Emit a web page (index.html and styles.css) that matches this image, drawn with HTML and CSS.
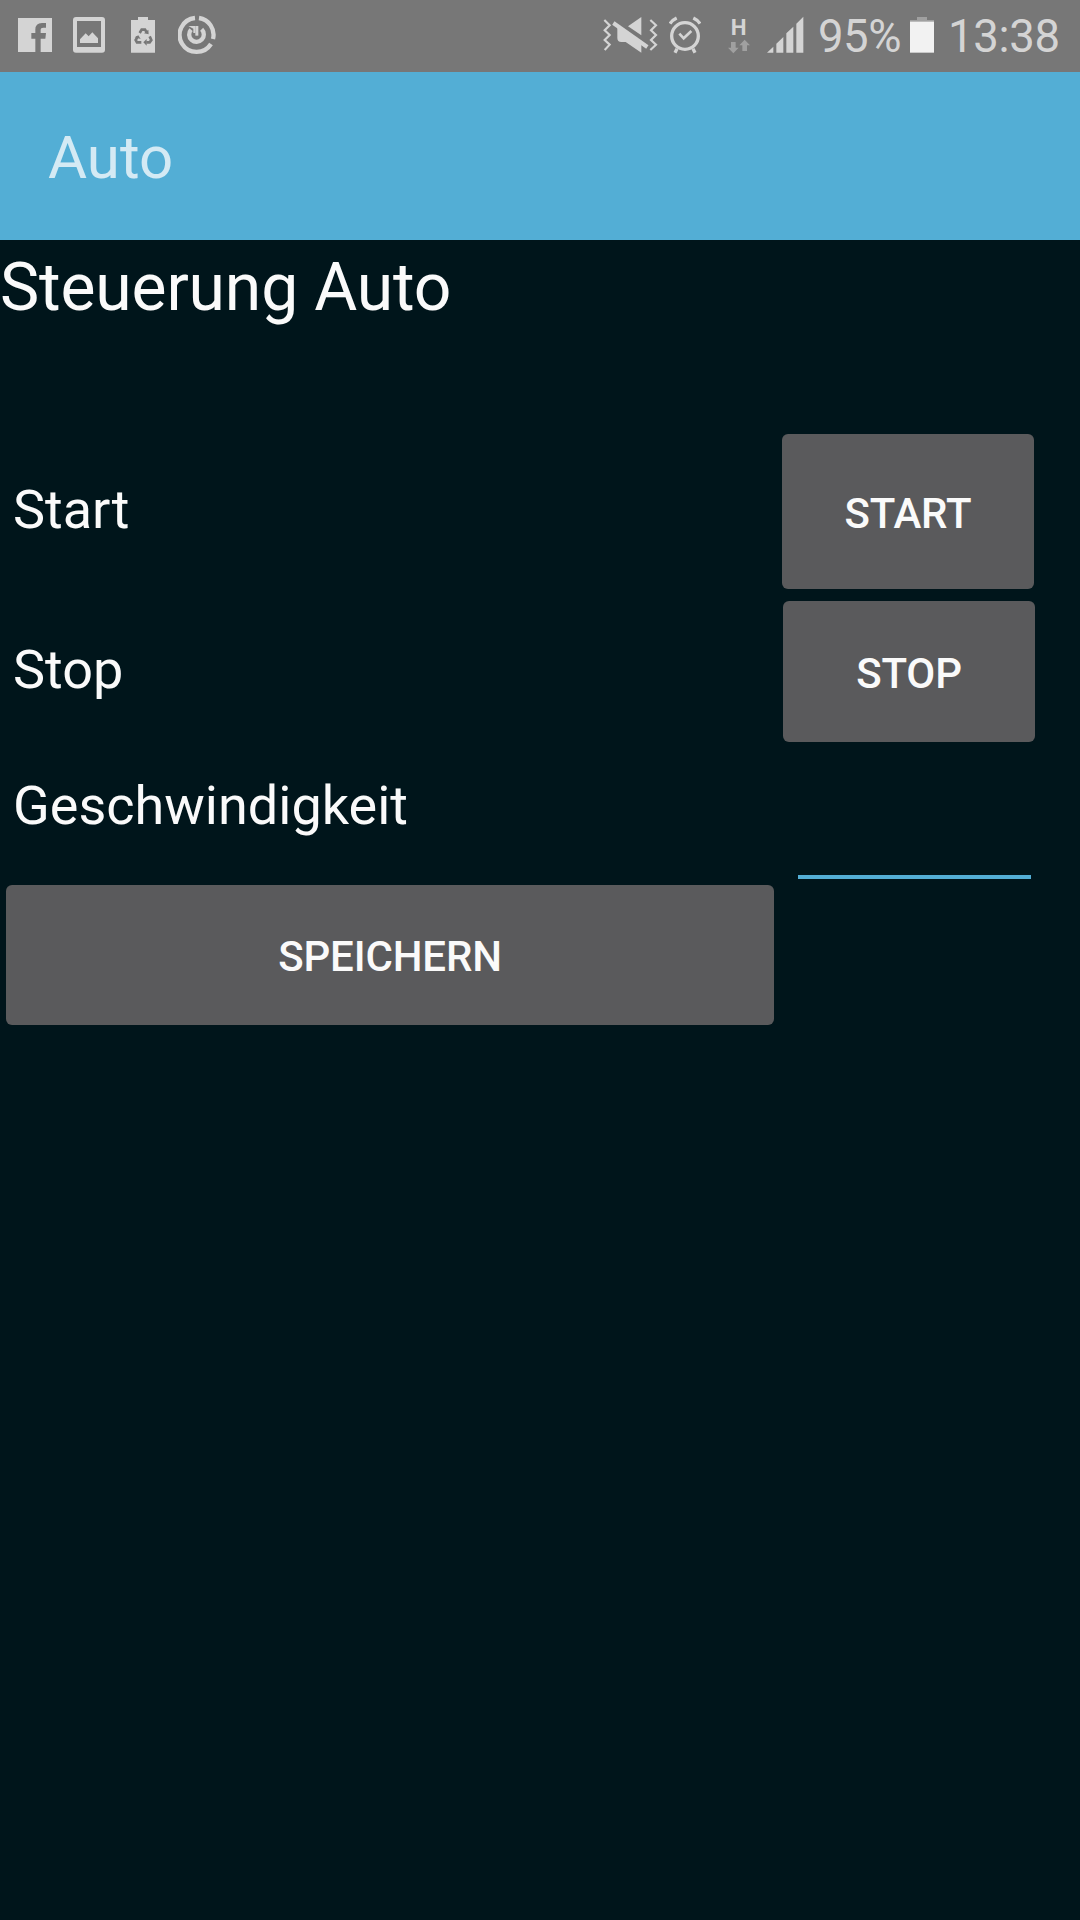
FILE: index.html
```html
<!DOCTYPE html>
<html lang="de">
<head>
<meta charset="utf-8">
<title>Auto</title>
<link rel="stylesheet" href="styles.css">
</head>
<body>
<div class="status-bar">
  <div class="notifications">
    <svg class="icon" width="36" height="72" viewBox="51 0 108 216">
      <path d="M54 54H156V156H122V116H136L138 99H122V90Q122 83 130 83H138V69H126Q106 69 106 89V99H94V116H106V156H54Z"/>
    </svg>
    <svg class="icon" width="32" height="72" viewBox="219 0 96 216">
      <path fill-rule="evenodd" d="M228 51H306Q315 51 315 60V149Q315 158 306 158H228Q219 158 219 149V60Q219 51 228 51ZM231 63V141H303V63Z"/>
      <path d="M240 129V118L257 100L266 109L277 97L294 115V129Z"/>
    </svg>
    <svg class="icon" width="24" height="72" viewBox="393 0 72 216">
      <path d="M393 60H414V51H444V60H465V158H393Z"/>
      <g class="recycle">
        <path d="M419 99L425 89H435L440 97"/>
        <path d="M449 109L454 120L449 127H439"/>
        <path d="M424 127H411L407 120L413 110"/>
      </g>
      <g class="recycle-tips">
        <path d="M432 100L446 103L445 89Z"/>
        <path d="M440 117V137L430 127Z"/>
        <path d="M404 112L415 106L422 117Z"/>
      </g>
    </svg>
    <svg class="icon" width="38" height="72" viewBox="534 0 114 216">
      <path class="line ring" d="M585 54A51 51 0 1 0 633 132M639 117A51 51 0 0 0 597 54"/>
      <path class="line ring" d="M573 89A22 22 0 1 0 605 88"/>
      <path d="M565 78H586V99H580V86Z"/>
      <path d="M586 78H595V107H586Z"/>
    </svg>
  </div>
  <div class="system">
    <svg class="icon" width="55" height="72" viewBox="38 0 165 216">
      <path d="M113 79L153 51V106ZM81 84L88 83L153 126V158L106 126H93Q81 126 81 114Z"/>
      <path class="line slash" d="M69 69L171 141"/>
      <path class="line wave" d="M42 60L58 76L43 91L58 105L43 120L58 134L43 150"/>
      <path class="line wave" d="M180 60L197 76L182 91L197 105L182 120L197 134L180 150"/>
    </svg>
    <svg class="icon alarm" width="32" height="72" viewBox="237 0 96 216">
      <circle class="line" cx="285" cy="108" r="40"/>
      <path class="line check" d="M268 101L281 115L304 93"/>
      <path class="line bell" d="M240 71Q247 60 260 54M310 54Q323 60 330 71M261 146L255 158M309 146L315 158"/>
    </svg>
    <svg class="icon network" width="22" height="72" viewBox="413 0 66 216">
      <text class="network-type" x="421" y="104.500">H</text>
      <path class="dim" d="M422 126H436V143H445L429 160L413 143H422ZM456 153V136H447L463 119L479 136H470V153Z"/>
    </svg>
    <svg class="icon signal" width="37" height="72" viewBox="530 0 111 216">
      <path d="M530 158L549 140V158ZM558 158V131L579 111V158ZM588 158V100L609 80V158ZM618 158V71L639 50V158Z"/>
    </svg>
    <span class="percent">95%</span>
    <svg class="icon battery" width="24" height="72" viewBox="330 0 72 216">
      <path class="dim-cap" d="M330 60H351V51H381V60H402V66H330Z"/>
      <path class="charge" d="M330 65H402V158H330Z"/>
    </svg>
    <time class="clock">13:38</time>
  </div>
</div>
<header class="app-bar">Auto</header>
<main class="screen">
  <h1 class="heading">Steuerung Auto</h1>
  <div class="row row-start">
    <span class="label">Start</span>
    <button class="button">START</button>
  </div>
  <div class="row row-stop">
    <span class="label">Stop</span>
    <button class="button">STOP</button>
  </div>
  <div class="row row-speed">
    <label class="label" for="speed">Geschwindigkeit</label>
    <input class="field" id="speed" type="text">
  </div>
  <button class="button save">SPEICHERN</button>
</main>
</body>
</html>
```

FILE: styles.css
```css
* { box-sizing: border-box; }

body {
  margin: 0;
  min-height: 1920px;
  background: #00151b;
  color: #fafafa;
  font-family: Roboto, "Noto Sans", sans-serif;
}

.status-bar {
  display: flex;
  justify-content: space-between;
  height: 72px;
  padding: 0 20px 0 17px;
  background: #777;
  color: #d4d4d4;
  font-size: 45.5px;
  line-height: 72px;
}

.notifications, .system { display: flex; }
.notifications { gap: 20px; }
.notifications .icon:nth-child(3) { margin-left: 6px; }
.notifications .icon:nth-child(4) { margin-left: 3px; }

.icon { display: block; flex: none; fill: #d4d4d4; }
.line { fill: none; stroke: #d4d4d4; stroke-width: 10; }
.ring { stroke-width: 13; }
.slash { stroke-width: 12; }
.wave { stroke-width: 6.5; }
.check { stroke-width: 8; }
.recycle { fill: none; stroke: #777; stroke-width: 8; }
.recycle-tips { fill: #777; }
.dim { fill: #a0a0a0; }
.dim-cap { fill: #a0a0a0; }
.charge { fill: #f2f2f2; }
.alarm { margin-left: 11px; }
.network { margin-left: 27px; }
.network-type { font-size: 67px; font-weight: 700; }
.signal { margin-left: 17px; }
.percent { width: 103px; padding-left: 14px; white-space: nowrap; letter-spacing: -0.5px; }
.percent, .clock { padding-top: 1px; }
.battery { margin-left: 3px; }
.clock { width: 126px; padding-left: 14px; white-space: nowrap; letter-spacing: -0.3px; }

.app-bar {
  height: 168px;
  padding: 2px 0 0 48px;
  background: #53aed5;
  color: #d4eaf4;
  font-size: 60px;
  line-height: 168px;
}

.screen { display: flex; flex-direction: column; }

.heading {
  margin: 9px 0 107px;
  font-size: 66px;
  font-weight: 400;
  line-height: 78px;
  letter-spacing: -0.15px;
}

.row {
  display: flex;
  justify-content: space-between;
  padding-left: 13px;
}

.row-start { height: 155px; padding-right: 46px; }
.row-stop { height: 141px; margin-top: 12px; padding-right: 45px; }
.row-speed { height: 137px; padding-right: 49px; }

.label { font-size: 54px; line-height: 64px; }
.row-start .label { padding-top: 44px; }
.row-stop .label { padding-top: 37px; }
.row-speed .label { padding-top: 32px; }

.button {
  width: 252px;
  padding: 3px 0 0;
  border: 0;
  border-radius: 6px;
  background: #5a5a5c;
  color: #fafafa;
  font: 500 42px Roboto, "Noto Sans", sans-serif;
  letter-spacing: -0.15px;
}

.field {
  width: 233px;
  padding: 0;
  border: 0;
  border-bottom: 4px solid #53aed5;
  background: transparent;
  color: #fafafa;
  font: 54px Roboto, "Noto Sans", sans-serif;
  outline: none;
}

.save { width: 768px; height: 140px; margin: 6px 0 0 6px; }
```
